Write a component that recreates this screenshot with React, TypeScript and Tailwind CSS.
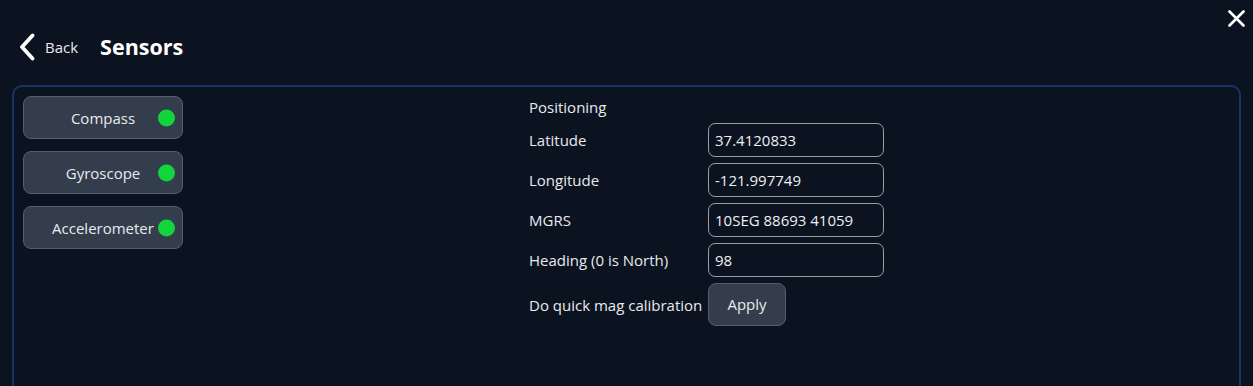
import React from "react";

const SENSORES = ["Compass", "Gyroscope", "Accelerometer"];

const CAMPOS = [
  { rotulo: "Latitude", valor: "37.4120833" },
  { rotulo: "Longitude", valor: "-121.997749" },
  { rotulo: "MGRS", valor: "10SEG 88693 41059" },
  { rotulo: "Heading (0 is North)", valor: "98" },
];

export default function App() {
  return (
    <div
      className="relative h-[386px] w-[1253px] overflow-hidden bg-[#0c1320] text-[#e8eaee]"
      style={{ fontFamily: '"Open Sans", "Noto Sans", sans-serif' }}
    >
      <button
        type="button"
        aria-label="Close"
        className="absolute right-[8px] top-[10px] flex h-[17px] w-[17px] items-center justify-center"
      >
        <svg width="17" height="17" viewBox="0 0 17 17" fill="none">
          <path d="M1.5 1.5 L15.5 15.5 M15.5 1.5 L1.5 15.5" stroke="#ffffff" strokeWidth="2.6" strokeLinecap="round" />
        </svg>
      </button>

      <header className="mt-[28px] mb-[19px] flex h-[38px] items-center pl-[19px]">
        <button type="button" className="flex items-center gap-[10px]">
          <svg width="16" height="28" viewBox="0 0 16 28" fill="none">
            <path d="M13.5 2.5 L3 14 L13.5 25.5" stroke="#ffffff" strokeWidth="3.8" strokeLinecap="round" strokeLinejoin="round" />
          </svg>
          <span className="text-[15px] text-[#e8eaee]">Back</span>
        </button>
        <h1 className="ml-[22px] text-[21.5px] font-bold text-white">Sensors</h1>
      </header>

      <section className="mx-[12px] flex h-[330px] rounded-[10px] border-2 border-[#163461] p-[9px]">
        <div className="flex w-[506px] shrink-0 flex-col gap-[12px]">
          {SENSORES.map((nome) => (
            <button
              key={nome}
              type="button"
              className="relative flex h-[43px] w-[160px] items-center justify-center rounded-[8px] border border-[#555e6c] bg-[#343d4c] pt-[1px] text-[15px] text-[#e8eaee]"
            >
              {nome}
              <span className="absolute right-[7px] top-1/2 h-[17px] w-[17px] -translate-y-1/2 rounded-full bg-[#12d43c]" />
            </button>
          ))}
        </div>

        <div className="flex flex-col gap-[6px] text-[15px]">
          <div className="flex h-[21px] items-center pt-[1px]">Positioning</div>
          {CAMPOS.map((campo) => (
            <div key={campo.rotulo} className="flex h-[34px] items-center">
              <span className="w-[179px] shrink-0 pt-[1px]">{campo.rotulo}</span>
              <input
                type="text"
                defaultValue={campo.valor}
                className="h-[34px] w-[176px] rounded-[7px] border border-[#9a9ea6] bg-transparent px-[6px] text-[15px] text-[#eef0f3] outline-none"
              />
            </div>
          ))}
          <div className="flex h-[43px] items-center">
            <span className="w-[179px] shrink-0 pt-[1px]">Do quick mag calibration</span>
            <button
              type="button"
              className="h-[43px] w-[78px] rounded-[8px] border border-[#555e6c] bg-[#343d4c] text-[15px] text-[#e8eaee]"
            >
              Apply
            </button>
          </div>
        </div>
      </section>
    </div>
  );
}
